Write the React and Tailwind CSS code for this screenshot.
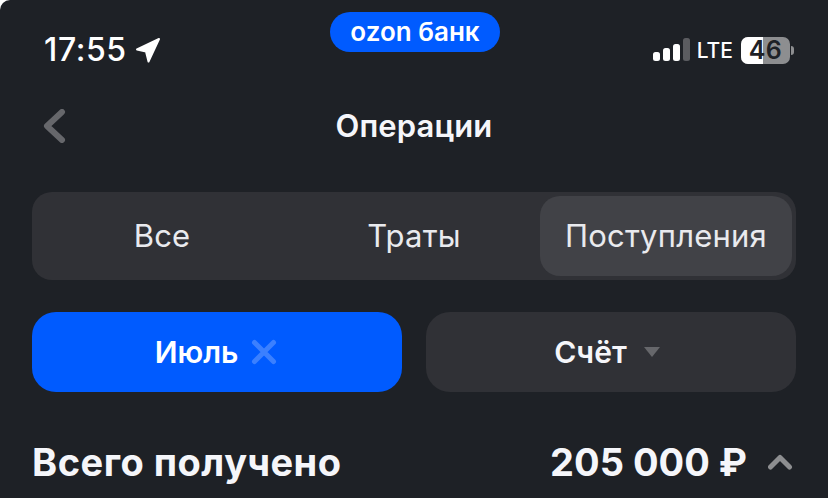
const font = { fontFamily: 'Inter, "Noto Sans", sans-serif' }

function Signal() {
  return (
    <svg width="37" height="24" viewBox="0 0 37 24" className="block">
      <rect x="0" y="14" width="7" height="9" rx="2.5" fill="#fff" />
      <rect x="10" y="10" width="7" height="13" rx="2.5" fill="#fff" />
      <rect x="20" y="6" width="7" height="17" rx="2.5" fill="#fff" />
      <rect x="30" y="0" width="7" height="23" rx="2.5" fill="#5b5c60" />
    </svg>
  )
}

function Battery() {
  return (
    <div className="flex items-center">
      <div className="relative h-[27px] w-[49px] rounded-[7px] bg-[#8d8e90]">
        <div className="h-full w-[22px] rounded-l-[7px] bg-white"></div>
        <span className="absolute inset-0 flex items-center justify-center text-[25px] leading-none font-semibold tracking-[0.5px] text-[#1e2126]">46</span>
      </div>
      <div className="ml-[1px] h-[9px] w-[3px] rounded-r-full bg-[#8d8e90]"></div>
    </div>
  )
}

export default function App() {
  return (
    <div className="h-[498px] w-[828px] overflow-hidden bg-white" style={font}>
      <div className="relative h-full rounded-tl-[10px] bg-[#1e2126] px-8 text-[#f5f6fa]">
        <div className="absolute top-3 left-[330px] flex h-10 w-[170px] items-center justify-center rounded-[20px] bg-[#005bff] text-[26px] leading-none font-semibold text-white">
          ozon банк
        </div>

        <div className="flex h-[100px] items-center justify-between pl-3">
          <div className="flex items-center gap-2">
            <span className="text-[32px] leading-none font-medium tracking-[0.6px] text-white">17:55</span>
            <svg width="26" height="26" viewBox="0 0 26 26">
              <path d="M2 12.500 24 2 13.500 24.500 11 14.500z" fill="#fff" stroke="#fff" strokeWidth="2" strokeLinejoin="round" />
            </svg>
          </div>
          <div className="flex items-center gap-2 pr-[2px]">
            <Signal />
            <span className="-ml-px text-[21px] leading-none font-medium text-white">LTE</span>
            <Battery />
          </div>
        </div>

        <div className="relative -mt-[2px] flex h-[55px] items-center justify-center">
          <svg width="24" height="34" viewBox="0 0 24 34" className="absolute left-[10px]">
            <path d="M20 3 5 17l15 14" fill="none" stroke="#66676b" strokeWidth="6" strokeLinecap="round" strokeLinejoin="round" />
          </svg>
          <span className="text-[31px] leading-none font-semibold tracking-[0.1px]">Операции</span>
        </div>

        <div className="mt-[39px] grid h-[88px] grid-cols-3 items-center rounded-[20px] bg-[#303136] p-1 text-[31px] tracking-[0.2px] text-[#e9eaee]">
          <div className="text-center">Все</div>
          <div className="text-center">Траты</div>
          <div className="flex h-20 items-center justify-center rounded-[20px] bg-[#414247]">Поступления</div>
        </div>

        <div className="mt-8 grid grid-cols-2 gap-6">
          <div className="flex h-20 items-center justify-center gap-[13px] rounded-3xl bg-[#005bff] pr-[2px] text-[30px] font-semibold text-white">
            Июль
            <svg width="26" height="26" viewBox="0 0 26 26">
              <path d="M3.500 3.500l19 19M22.500 3.500l-19 19" stroke="#3b80ff" strokeWidth="5" strokeLinecap="round" />
            </svg>
          </div>
          <div className="flex h-20 items-center justify-center gap-[17px] rounded-3xl bg-[#303136] pr-2 text-[30px] font-semibold">
            Счёт
            <svg width="16" height="12" viewBox="0 0 16 12">
              <path d="M0 1h16L8 11z" fill="#66676b" />
            </svg>
          </div>
        </div>

        <div className="mt-[49px] flex items-center justify-between">
          <span className="text-[38px] leading-[42px] font-bold tracking-[0.5px]">Всего получено</span>
          <div className="flex items-center gap-[21px]">
            <span className="text-[38px] leading-[42px] font-bold">205 000 ₽</span>
            <svg width="28" height="18" viewBox="0 0 28 18">
              <path d="M2.500 14 12 4.500l9.500 9.500" fill="none" stroke="#8d8e90" strokeWidth="5" strokeLinecap="round" strokeLinejoin="round" />
            </svg>
          </div>
        </div>
      </div>
    </div>
  )
}
